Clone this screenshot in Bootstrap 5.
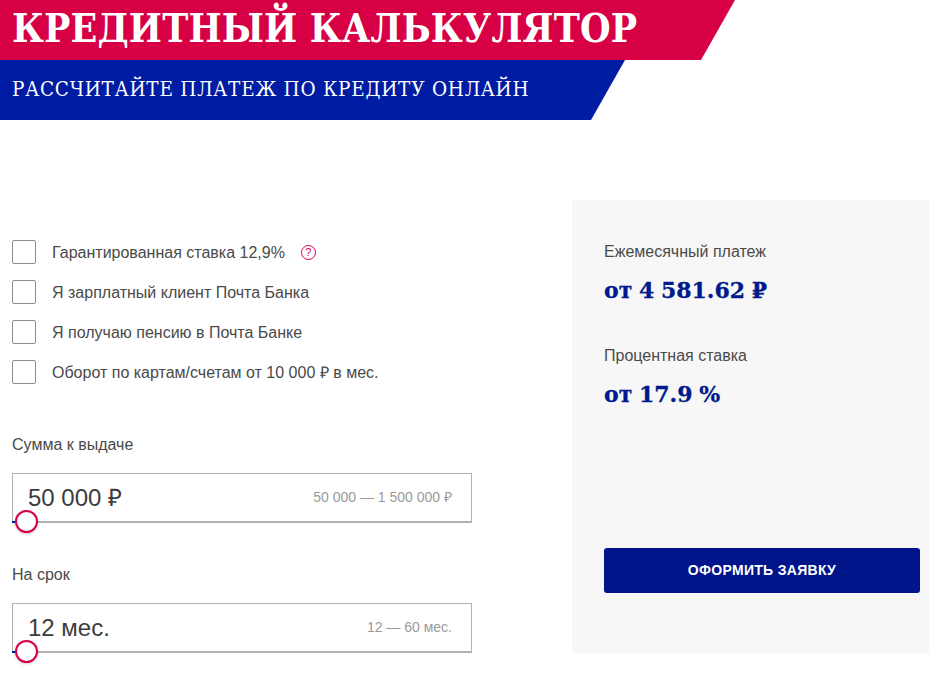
<!DOCTYPE html>
<html lang="ru">
<head>
<meta charset="utf-8">
<title>Кредитный калькулятор</title>
<link rel="stylesheet" href="https://cdn.jsdelivr.net/npm/bootstrap@5.3.0/dist/css/bootstrap.min.css">
<style>
body{background:#fff;color:#3c3c3c;font-family:"Liberation Sans",Arial,sans-serif;font-size:16px}
.hero-red{height:60px;width:735px;background:#d70044;clip-path:polygon(0 0,100% 0,701px 100%,0 100%);padding-left:12px}
.hero-red h1{margin:0;color:#fff;font-family:"DejaVu Serif Condensed","DejaVu Serif",serif;font-weight:700;font-size:39px;line-height:56px;letter-spacing:.15px}
.hero-blue{height:60px;width:625px;background:#001ca3;clip-path:polygon(0 0,100% 0,591px 100%,0 100%);padding-left:12px}
.hero-blue p{margin:0;color:#fff;font-family:"DejaVu Serif Condensed","DejaVu Serif",serif;font-size:20.5px;line-height:58px;letter-spacing:.78px}
.calc-wrap{margin-top:80px;padding-bottom:30px}
.calc-left{width:572px;padding:40px 0 0 12px}
.calc-panel{width:357px;height:453px;background:#f7f7f7;padding:42px 9px 60px 32px}
.opt{height:24px;margin-bottom:16px;padding:0;min-height:0}
.opt .form-check-input{width:24px;height:24px;margin:0 16px 0 0;float:none;flex:none;border:1px solid #8c8c8c;border-radius:2px}
.opt .form-check-label{font-size:16px;line-height:24px;padding-top:1px;color:#4a4a4a}
.hint{width:15px;height:15px;margin-left:16px;border:1px solid #d70044;border-radius:50%;color:#d70044;font-size:11px;line-height:13px;text-align:center}
.fld-label{font-size:16px;line-height:20px;color:#4a4a4a;margin-bottom:18px}
.fld-first{margin-top:51px}
.fld-box{width:460px;height:50px;border:1px solid #b2b2b2;border-bottom-width:2px;padding:0 19px 0 15px;margin-bottom:42px}
.fld-val{font-size:24px;color:#3c3c3c}
.fld-range{font-size:14px;color:#9a9a9a}
.fld-fill{position:absolute;left:-1px;bottom:-2px;width:6px;height:2px;background:#001ca3}
.fld-knob{position:absolute;left:2px;bottom:-12px;width:23px;height:23px;border-radius:50%;background:#fff;border:2px solid #d70044;box-shadow:0 1px 3px rgba(0,0,0,.2)}
.pay-label{font-size:16px;line-height:20px;color:#4a4a4a;margin-bottom:15px}
.pay-val{font-family:"DejaVu Serif","Liberation Serif",serif;font-weight:700;font-size:22px;line-height:26px;color:#001a8c;margin-bottom:43px;word-spacing:-1px;-webkit-text-stroke:.3px #001a8c}
.send-btn{display:block;width:316px;height:45px;margin-top:141px;background:#00158a;border:0;border-radius:3px;color:#fff;font-size:14px;font-weight:700;line-height:45px;padding:0;letter-spacing:.3px}
</style>
</head>
<body>
<header>
  <div class="hero-red"><h1>КРЕДИТНЫЙ КАЛЬКУЛЯТОР</h1></div>
  <div class="hero-blue"><p>РАССЧИТАЙТЕ ПЛАТЕЖ ПО КРЕДИТУ ОНЛАЙН</p></div>
</header>
<main class="calc-wrap d-flex align-items-start">
  <section class="calc-left">
    <div class="form-check opt d-flex align-items-center">
      <input class="form-check-input" type="checkbox" id="c1">
      <label class="form-check-label" for="c1">Гарантированная ставка 12,9%</label>
      <span class="hint">?</span>
    </div>
    <div class="form-check opt d-flex align-items-center">
      <input class="form-check-input" type="checkbox" id="c2">
      <label class="form-check-label" for="c2">Я зарплатный клиент Почта Банка</label>
    </div>
    <div class="form-check opt d-flex align-items-center">
      <input class="form-check-input" type="checkbox" id="c3">
      <label class="form-check-label" for="c3">Я получаю пенсию в Почта Банке</label>
    </div>
    <div class="form-check opt d-flex align-items-center">
      <input class="form-check-input" type="checkbox" id="c4">
      <label class="form-check-label" for="c4">Оборот по картам/счетам от 10 000 ₽ в мес.</label>
    </div>
    <div class="fld-label fld-first">Сумма к выдаче</div>
    <div class="fld-box position-relative d-flex justify-content-between align-items-center">
      <span class="fld-val">50 000 ₽</span>
      <span class="fld-range">50 000 — 1 500 000 ₽</span>
      <span class="fld-fill"></span><span class="fld-knob"></span>
    </div>
    <div class="fld-label">На срок</div>
    <div class="fld-box position-relative d-flex justify-content-between align-items-center mb-0">
      <span class="fld-val">12 мес.</span>
      <span class="fld-range">12 — 60 мес.</span>
      <span class="fld-fill"></span><span class="fld-knob"></span>
    </div>
  </section>
  <aside class="calc-panel">
    <div class="pay-label">Ежемесячный платеж</div>
    <div class="pay-val">от 4 581.62 ₽</div>
    <div class="pay-label">Процентная ставка</div>
    <div class="pay-val mb-0">от 17.9 %</div>
    <button type="button" class="btn btn-primary send-btn">ОФОРМИТЬ ЗАЯВКУ</button>
  </aside>
</main>
<script src="https://cdn.jsdelivr.net/npm/bootstrap@5.3.0/dist/js/bootstrap.bundle.min.js"></script>
</body>
</html>
